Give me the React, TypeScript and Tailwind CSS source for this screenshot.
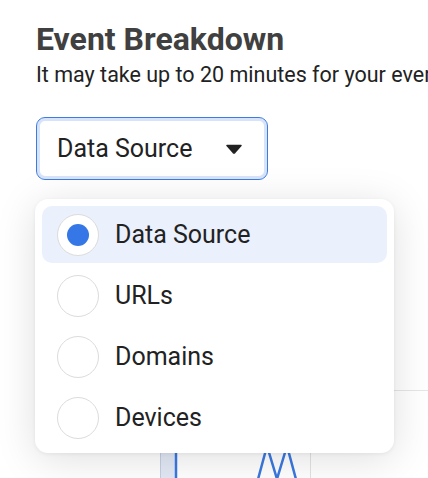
import * as React from "react";
import { useState } from "react";

const options = ["Data Source", "URLs", "Domains", "Devices"];

export default function App() {
  const [selected, setSelected] = useState("Data Source");

  return (
    <div className="relative min-h-[478px] w-[428px] overflow-hidden bg-white font-['Roboto',sans-serif] pl-9 pt-[20px]">
      {/* Header */}
      <h1 className="text-[32px] font-bold leading-[38px] text-[#404040] whitespace-nowrap">
        Event Breakdown
      </h1>
      <p className="mt-[4px] text-[21.5px] leading-[25px] text-[#222] whitespace-nowrap">
        It may take up to 20 minutes for your events to appear.
      </p>

      {/* Select trigger */}
      <button className="mt-[30px] flex h-[63px] w-[232px] items-center justify-between rounded-[9px] border border-[#3b7be3] bg-white pl-[20px] pr-[24px] shadow-[inset_0_0_0_3px_#d6e3f9]">
        <span className="text-[25px] text-[#222]">{selected}</span>
        <svg width="18" height="10" viewBox="0 0 18 10">
          <path d="M2 1.5 H16 L9.8 8.6 Q9 9.4 8.2 8.6 Z" fill="#222" stroke="#222" strokeWidth="1.5" strokeLinejoin="round" />
        </svg>
      </button>

      {/* Chart behind the menu */}
      <div className="ml-[104px] mt-[210px] h-[88px] border-t border-[#e6e6e6]">
        <svg width="288" height="88" viewBox="0 0 288 88">
          <rect x="20" y="0" width="16" height="88" fill="#e2e9f5" />
          <line x1="20.5" y1="0" x2="20.5" y2="88" stroke="#c4cfe2" strokeWidth="1" />
          <line x1="36" y1="0" x2="36" y2="88" stroke="#3a78e0" strokeWidth="2.5" />
          <polyline
            points="117,92 127,55 137,88 147,55 157,92"
            fill="none"
            stroke="#3a78e0"
            strokeWidth="2.5"
          />
          <line x1="170.5" y1="60" x2="170.5" y2="88" stroke="#e3e3e3" strokeWidth="1" />
        </svg>
      </div>

      {/* Dropdown menu */}
      <div className="absolute left-[35px] top-[199px] flex w-[359px] flex-col gap-[4px] rounded-[13px] bg-white p-[7px] shadow-[0_6px_40px_rgba(0,0,0,0.13),0_1px_4px_rgba(0,0,0,0.06)]">
        {options.map((opt) => {
          const active = opt === selected;
          return (
            <div
              key={opt}
              onClick={() => setSelected(opt)}
              className={`flex h-[57px] items-center gap-[16px] rounded-[10px] pl-[15px] ${
                active ? "bg-[#eaf0fc]" : "bg-white"
              }`}
            >
              <span className="flex h-[42px] w-[42px] items-center justify-center rounded-full border border-[#dcdcdc] bg-white">
                {active && <span className="h-[22px] w-[22px] rounded-full bg-[#3577e6]" />}
              </span>
              <span className="text-[25px] text-[#222]">{opt}</span>
            </div>
          );
        })}
      </div>
    </div>
  );
}
